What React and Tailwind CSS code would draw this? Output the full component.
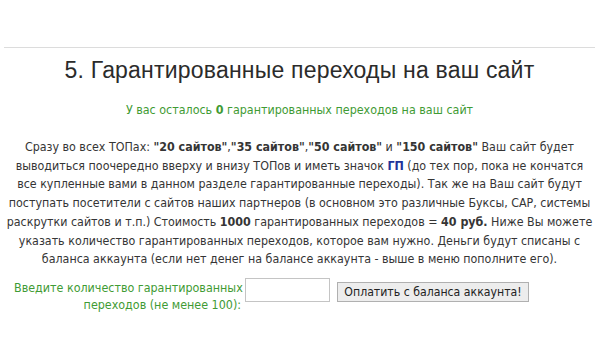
export default function App() {
  return (
    <div className="w-[599px] h-[354px] bg-white overflow-hidden" style={{ fontFamily: '"DejaVu Sans Condensed", "DejaVu Sans", sans-serif' }}>
      <div className="pt-[47px] px-[4px]">
        <div className="h-px bg-[#dcdcdc]" />
      </div>
      <h1 className="text-center text-[23px] leading-[28px] tracking-[0.2px] text-[#2b2b2b] mt-[8px]" style={{ fontFamily: '"Liberation Sans", Arial, sans-serif' }}>
        5. Гарантированные переходы на ваш сайт
      </h1>
      <p className="text-center text-[12.4px] leading-[16px] text-[#3f9b34] mt-[18px] whitespace-nowrap">
        У вас осталось <b>0</b> гарантированных переходов на ваш сайт
      </p>
      <p className="text-center text-[12.35px] leading-[18.7px] text-[#353535] mt-[20px] whitespace-nowrap">
        Сразу во всех ТОПах: <b>"20 сайтов"</b>,<b>"35 сайтов"</b>,<b>"50 сайтов"</b> и <b>"150 сайтов"</b> Ваш сайт будет<br />
        выводиться поочередно вверху и внизу ТОПов и иметь значок <b className="text-[#22339a]">ГП</b> (до тех пор, пока не кончатся<br />
        все купленные вами в данном разделе гарантированные переходы). Так же на Ваш сайт будут<br />
        поступать посетители с сайтов наших партнеров (в основном это различные Буксы, САР, системы<br />
        раскрутки сайтов и т.п.) Стоимость <b>1000</b> гарантированных переходов = <b>40 руб.</b> Ниже Вы можете<br />
        указать количество гарантированных переходов, которое вам нужно. Деньги будут списаны с<br />
        баланса аккаунта (если нет денег на балансе аккаунта - выше в меню пополните его).
      </p>
      <div className="flex items-start mt-[10px] pl-[14px]">
        <div className="w-[227px] text-right text-[12.4px] leading-[17px] text-[#3f9b34] whitespace-nowrap">
          Введите количество гарантированных<br />переходов (не менее 100):
        </div>
        <input className="ml-[4px] w-[85px] h-[24px] border border-[#c4c4c4] bg-white mt-[-1px]" />
        <button className="ml-[7px] w-[192px] h-[20px] mt-[3px] border border-[#b0b0b0] bg-[#ededed] text-[12.2px] leading-[18px] text-[#222] whitespace-nowrap">
          Оплатить с баланса аккаунта!
        </button>
      </div>
    </div>
  )
}
